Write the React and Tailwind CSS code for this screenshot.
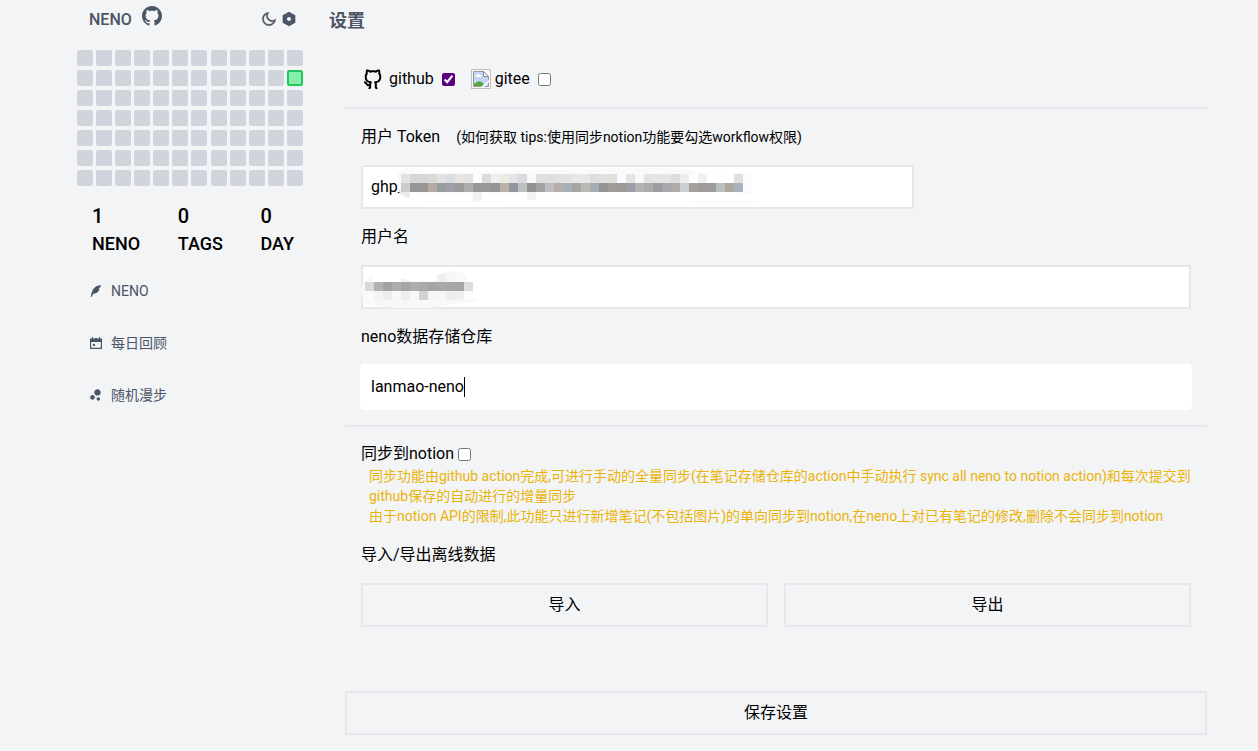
import React, { useState } from 'react';
import { RiGithubFill, RiGithubLine, RiMoonLine, RiSettingsFill, RiQuillPenFill, RiBubbleChartFill } from 'react-icons/ri';

const DAYS = 12 * 7;

const CalendarIcon = ({ size }) => (
    <svg width={size} height={size} viewBox="0 0 14 14" fill="currentColor" aria-hidden="true">
        <path fillRule="evenodd" d="M3 1h1v1.5h2V2h2v.5h2V1h1v1.500h1.500q.5 0 .5.5v9.500q0 .5-.5.5h-11q-.5 0-.5-.5V3q0-.5.5-.5H3zM2.200 6v5.800h9.600V6z" />
        <path d="M4 8h2v2H4z" />
    </svg>
);

const stats = [
    { label: 'NENO', value: 1 },
    { label: 'TAGS', value: 0 },
    { label: 'DAY', value: 0 },
];

const navItems = [
    { label: 'NENO', icon: RiQuillPenFill },
    { label: '每日回顾', icon: CalendarIcon },
    { label: '随机漫步', icon: RiBubbleChartFill },
];

const tokenMask = [
    ['#e2e2e2', '#d6d6d6', '#d6d6d6', '#dbd9d6', '#e2e2e2', '#d9dee3', '#e6e5e3', '#e1e2e4', '#fdfefe', '#dadbdb', '#efefef', '#eceae5', '#e3e4e5', '#dbdbdd', '#f9f9f9', '#dfdfdd', '#dededd', '#dfe1e4', '#e3e3e3', '#e8e8e8', '#e8e8e8', '#dfddda', '#dfe1e3', '#e1dfdd', '#f8fbff', '#e4e4e4', '#f8f8f7', '#e1e3e7', '#e3e4e5', '#e9e4e2', '#dce0e0', '#eeeeee', '#ffffff', '#f0f0f0', '#ffffff', '#ffffff', '#ffffff', '#e2e0de', '#fafbfe'],
    ['#cccccc', '#969696', '#969696', '#b5aaa4', '#989c9b', '#9fa0aa', '#9c9c9c', '#aeaeae', '#96979b', '#999999', '#949494', '#b9b2a6', '#92959d', '#bbc0c2', '#949290', '#a2a2a2', '#bfbfbf', '#b5aeaa', '#a9afb6', '#a7a5a2', '#b9b8b4', '#a8adb2', '#949494', '#9f9c99', '#9c9a98', '#9c9fa7', '#b3b3b3', '#adacaa', '#9d9d9d', '#a6a8ad', '#b0aaa9', '#c9d0cf', '#a5a09e', '#9f9d9b', '#9f9d9b', '#babfc2', '#ada8a0', '#abb1bb', '#fafbfe'],
];

const nameMask = [
    ['#d9d8d6', '#b4b2b0', '#a1a2a5', '#acacad', '#a4a7aa', '#adadad', '#a9abab', '#a4a4a4', '#a9a8a6', '#a8a7a5', '#a3a6a8', '#dcdde0'],
    ['#fafafa', '#f6f4f2', '#ebedef', '#f8f8f8', '#eceef0', '#f8f8f8', '#d2d2d2', '#f6f6f6', '#f6f6f6', '#eeeeee', '#f0f0f0', '#fafcfc'],
];

const fieldClass = 'block h-11 w-full border-2 border-gray-200 bg-white px-2 pb-0.5 text-base text-black outline-none';
const buttonClass = 'h-11 border-2 border-gray-200 text-base text-black hover:bg-gray-200';

const Mosaic = ({ rows, x, y }) => rows.map((row, r) => row.map((color, c) => (
    <rect key={`${r}-${c}`} x={x + c * 9} y={y + r * 9} width="9" height="9" fill={color} />
)));

const BrokenImage = () => (
    <svg width="20" height="20" viewBox="0 0 20 20" role="img" aria-label="gitee logo">
        <rect x="0.5" y="0.5" width="19" height="19" fill="#f6f7f8" stroke="#c0c0c0" />
        <path d="M2.5 2.500h10l5 5v10h-15z" fill="#c3d5f5" stroke="#9a9a9a" />
        <path d="M12.500 2.500v5h5z" fill="#fff" stroke="#8d8d8d" />
        <path d="M4 8q0-2 2-2 1-2 3 0 2 0 2 2z" fill="#fff" />
        <path d="M3 17v-2q5-5 9-1l1 3z" fill="#55a83a" />
        <path d="M10 18l8-7v2l-5 5z" fill="#fff" />
    </svg>
);

const Sidebar = () => (
    <aside className="w-[226px] shrink-0">
        <div className="flex h-[50px] items-start justify-between pl-3 pr-1.5 pt-1 text-gray-600">
            <div className="flex items-start gap-2">
                <span className="pt-1 text-base font-medium leading-6">NENO</span>
                <a href="#github" aria-label="GitHub"><RiGithubFill size={24} /></a>
            </div>
            <div className="flex gap-1 pt-[7px]">
                <button type="button" aria-label="Dark mode"><RiMoonLine size={16} stroke="currentColor" strokeWidth={0.6} /></button>
                <button type="button" aria-label="Settings"><RiSettingsFill size={16} /></button>
            </div>
        </div>

        {/* Activity */}
        <div className="grid grid-flow-col grid-cols-[repeat(12,16px)] grid-rows-7 justify-between gap-y-1">
            {Array.from({ length: DAYS }, (_, i) => (
                <div
                    key={i}
                    className={`size-4 rounded-xs ${
                        i === DAYS - 6 ? 'border-2 border-[#22c55e] bg-[#86efac]' : 'bg-[#d1d4dc]'
                    }`}
                />
            ))}
        </div>

        <div className="flex justify-between pl-[15px] pr-[9px] pt-4 font-medium text-black">
            {stats.map((item) => (
                <div key={item.label}>
                    <div className="text-xl leading-7">{item.value}</div>
                    <div className="text-lg leading-7">{item.label}</div>
                </div>
            ))}
        </div>

        <nav className="flex flex-col gap-8 pl-3 pt-[23px]" aria-label="Main navigation">
            {navItems.map((item) => {
                const Icon = item.icon;
                return (
                    <a key={item.label} href="#nav" className="flex items-center gap-2 text-sm leading-5 text-gray-600">
                        <Icon size={14} />
                        <span>{item.label}</span>
                    </a>
                );
            })}
        </nav>
    </aside>
);

const App = () => {
    const [platform, setPlatform] = useState('github');
    const [syncNotion, setSyncNotion] = useState(false);
    const [token, setToken] = useState('ghp_');
    const [username, setUsername] = useState('');
    const [repo, setRepo] = useState('lanmao-neno');

    return (
        <div className="flex min-h-screen bg-gray-100 pl-[77px] pr-[51px] font-['Roboto','Noto_Sans_CJK_SC',sans-serif] text-base text-black">
            <Sidebar />

            <main className="ml-[26px] min-w-0 flex-1">
                <h1 className="h-[51px] pt-[7px] text-lg font-bold leading-7 text-gray-600">设置</h1>

                <div className="ml-4 pb-4">
                    <section className="flex gap-4 border-b-2 border-gray-200 p-4">
                        <label className="flex items-center">
                            <RiGithubLine size={24} className="mr-1" />
                            github
                            <input
                                type="checkbox"
                                className="ml-2 size-[13px] accent-[#5c0080]"
                                checked={platform === 'github'}
                                onChange={() => setPlatform('github')}
                            />
                        </label>
                        <label className="flex items-center">
                            <BrokenImage />
                            <span className="ml-1">gitee</span>
                            <input
                                type="checkbox"
                                className="ml-2 size-[13px]"
                                checked={platform === 'gitee'}
                                onChange={() => setPlatform('gitee')}
                            />
                        </label>
                    </section>

                    <section className="flex flex-col gap-4 border-b-2 border-gray-200 p-4">
                        <div className="flex items-center leading-6">
                            <label htmlFor="token">用户 Token</label>
                            <a href="#help" className="ml-4 text-sm">(如何获取 tips:使用同步notion功能要勾选workflow权限)</a>
                        </div>
                        <div className="relative w-2/3">
                            <input id="token" className={fieldClass} value={token} onChange={(e) => setToken(e.target.value)} />
                            <svg className="pointer-events-none absolute left-0 top-0" width="400" height="44" aria-hidden="true">
                                <path d="M36 9q12-12 28-2l80-1 120-3q50-2 80 5l46 1v20l-340 4q-14 0-14-24z" fill="#fafafa" />
                                <path d="M37 28h100l240-2v9H60l-12-2q-8 0-11-5z" fill="#fff" />
                                <path d="M38 24h11v9q-8-1-11-6z" fill="#ececec" />
                                <path d="M64 36h77v1h-77z M333 36h60v2h-60z" fill="#f8f8f8" />
                                <path d="M112 27h9v9h-9z M166 27h9v8h-9z" fill="#f1f2f3" />
                                <Mosaic rows={tokenMask} x={40} y={9} />
                            </svg>
                        </div>
                        <label htmlFor="username" className="leading-6">用户名</label>
                        <div className="relative">
                            <input id="username" className={fieldClass} value={username} onChange={(e) => setUsername(e.target.value)} />
                            <svg className="pointer-events-none absolute left-0 top-0" width="130" height="44" aria-hidden="true">
                                <path d="M0 24q4-12 12-13v6h28v-4l9 3h27v-6q18-8 30 0v25l13 0q-14 4-28 4l-20 4h-40l-25-4q-6-3-6-15z" fill="#f8f8f8" />
                                <path d="M40 13l9 3v2h-9z M76 10l9-2v10h-9z" fill="#eeefef" />
                                <Mosaic rows={nameMask} x={4} y={17} />
                            </svg>
                        </div>
                        <label htmlFor="repo" className="leading-6">neno数据存储仓库</label>
                        <div className="relative">
                            <input
                                id="repo"
                                className="block h-11 w-full rounded-sm bg-white px-2.5 pb-0.5 text-base text-black outline-none ring-1 ring-white"
                                value={repo}
                                onChange={(e) => setRepo(e.target.value)}
                            />
                            <span className="absolute left-[103px] top-3 h-5 w-px bg-black" />
                        </div>
                    </section>

                    <section className="flex flex-col gap-4 px-4 pb-4 pt-[15px]">
                        <div>
                            <label className="flex items-center leading-6">
                                同步到notion
                                <input
                                    type="checkbox"
                                    className="ml-1 size-[13px]"
                                    checked={syncNotion}
                                    onChange={(e) => setSyncNotion(e.target.checked)}
                                />
                            </label>
                            <div className="pb-px pl-2 text-sm leading-5 text-[#eab308]">
                                <p>同步功能由github action完成,可进行手动的全量同步(在笔记存储仓库的action中手动执行 sync all neno to notion action)和每次提交到github保存的自动进行的增量同步</p>
                                <p>由于notion API的限制,此功能只进行新增笔记(不包括图片)的单向同步到notion,在neno上对已有笔记的修改,删除不会同步到notion</p>
                            </div>
                        </div>
                        <h2 className="leading-6">导入/导出离线数据</h2>
                        <div className="grid grid-cols-2 gap-4">
                            <button type="button" className={buttonClass}>导入</button>
                            <button type="button" className={buttonClass}>导出</button>
                        </div>
                    </section>

                    <button type="button" className={`mt-12 w-full ${buttonClass}`}>保存设置</button>
                </div>
            </main>
        </div>
    );
};

export default App;
